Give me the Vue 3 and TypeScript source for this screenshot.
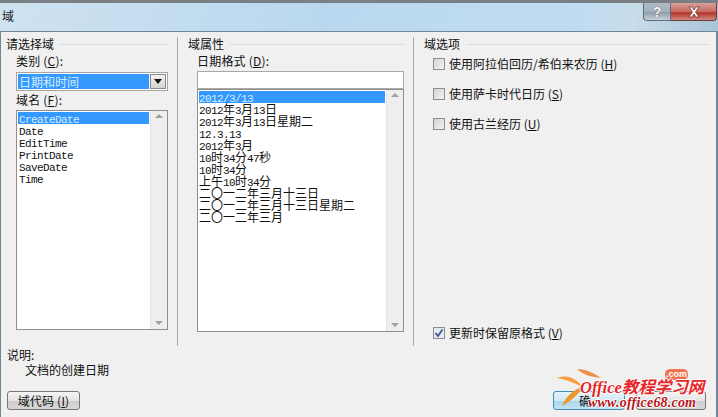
<script setup lang="ts">
type Seg = { t: string; latin: boolean }
const split = (s: string): Seg[] =>
  (s.match(/[\x00-\x7f]+|[^\x00-\x7f]+/g) ?? []).map((t) => ({ t, latin: t.charCodeAt(0) < 128 }))
const names = ['CreateDate', 'Date', 'EditTime', 'PrintDate', 'SaveDate', 'Time'].map(split)
const formats = [
  '2012/3/13',
  '2012年3月13日',
  '2012年3月13日星期二',
  '12.3.13',
  '2012年3月',
  '10时34分47秒',
  '10时34分',
  '上午10时34分',
  '二〇一二年三月十三日',
  '二〇一二年三月十三日星期二',
  '二〇一二年三月',
].map(split)
const options = [
  { label: '使用阿拉伯回历/希伯来农历', key: 'H' },
  { label: '使用萨卡时代日历', key: 'S' },
  { label: '使用古兰经历', key: 'U' },
]
</script>

<template>
  <div class="dialog">
    <header class="titlebar">
      <span class="title">域</span>
      <div class="caption">
        <span class="cap help">?</span>
        <span class="cap close">
          <svg width="18" height="12" viewBox="0 0 18 12"><path d="M4 1h3l2 3 2-3h3l-3.500 5L14 11h-3L9 8l-2 3H4l3.500-5z" fill="#fff" stroke="#6b2a26" stroke-width=".7"/></svg>
        </span>
      </div>
    </header>
    <main class="client">
      <div class="columns">
        <section class="group left">
          <div class="legend"><span>请选择域</span><i></i></div>
          <div class="field-label first">类别 (<u>C</u>):</div>
          <div class="combo">
            <span class="combo-value">日期和时间</span>
            <span class="combo-btn"><b></b></span>
          </div>
          <div class="field-label name-label">域名 (<u>F</u>):</div>
          <div class="listbox names">
            <div class="rows">
              <div v-for="(row, i) in names" :key="i" class="row" :class="{ sel: i === 0 }">
                <span v-for="(s, j) in row" :key="j" :class="s.latin ? 'latin' : 'cjk'">{{ s.t }}</span>
              </div>
            </div>
            <div class="scroll"><b class="up"></b><b class="down"></b></div>
          </div>
        </section>
        <section class="group middle">
          <div class="legend"><span>域属性</span><i></i></div>
          <div class="field-label first">日期格式 (<u>D</u>):</div>
          <div class="textbox"></div>
          <div class="listbox formats">
            <div class="rows">
              <div v-for="(row, i) in formats" :key="i" class="row" :class="{ sel: i === 0 }">
                <span v-for="(s, j) in row" :key="j" :class="s.latin ? 'latin' : 'cjk'">{{ s.t }}</span>
              </div>
            </div>
            <div class="scroll"><b class="up"></b><b class="down"></b></div>
          </div>
        </section>
        <section class="group right">
          <div class="legend"><span>域选项</span><i></i></div>
          <label v-for="o in options" :key="o.key" class="check">
            <span class="box"></span>
            <span>{{ o.label }} (<u>{{ o.key }}</u>)</span>
          </label>
          <label class="check keep">
            <span class="box on">
              <svg width="10" height="10" viewBox="0 0 10 10"><path d="M1.500 5 4 8 8.500 1.500" fill="none" stroke="#3c5a96" stroke-width="1.800"/></svg>
            </span>
            <span>更新时保留原格式 (<u>V</u>)</span>
          </label>
        </section>
      </div>
      <div class="desc">
        <div>说明:</div>
        <div class="desc-text">文档的创建日期</div>
      </div>
      <footer class="footer">
        <button class="btn code">域代码 (<u>I</u>)</button>
        <div class="actions">
          <button class="btn ok">确</button>
          <button class="btn cancel"></button>
        </div>
      </footer>
      <div class="mark">
        <svg class="swoosh" width="50" height="40" viewBox="0 0 50 40">
          <path d="M2 10C12 6 22 10 28 20 21 15 12 12 2 10z" fill="#f2a040"/>
          <path d="M22 1C31 1 39 5 46 10 37 9 28 7 22 1z" fill="#ee8f4c"/>
          <path d="M29 18C24 26 15 34 7 38 10 29 19 21 29 18z" fill="#ed9a2c"/>
        </svg>
        <span class="bubble">.com</span>
        <div class="mark-a">Office教程学习网</div>
        <div class="mark-b">www.office68.com</div>
      </div>
    </main>
  </div>
</template>

<style scoped>
.dialog {
  width: 718px;
  height: 417px;
  display: flex;
  flex-direction: column;
  overflow: hidden;
  background: #f0f0f0;
  color: #111;
  font: 12px/14px "Noto Sans CJK SC", "Liberation Sans", sans-serif;
  box-sizing: border-box;
}
.titlebar {
  height: 32px;
  flex: none;
  box-sizing: border-box;
  display: flex;
  justify-content: space-between;
  padding: 0 1px 0 2px;
  border-top: 3px solid #7a7f84;
  border-bottom: 1px solid #6f8598;
  background: linear-gradient(100deg, #cfe2f0 0%, #b9d8ef 45%, #bfdcf2 80%, #c8dcea 88%, #a9c4d8 100%);
}
.title { font-size: 12px; line-height: 25px; color: #222; }
.caption { display: flex; height: 18px; }
.cap { display: flex; align-items: center; justify-content: center; box-sizing: border-box; height: 18px; }
.help {
  width: 28px;
  border: 1px solid #5f6f7e;
  border-top: 0;
  border-radius: 0 0 0 4px;
  background: linear-gradient(#b0bac3, #a3afba 50%, #8e9ca8 55%, #c7d2da);
  color: #f4f4f4;
  font: bold 14px "Liberation Sans", sans-serif;
  text-shadow: 0 0 1px #444;
}
.close {
  width: 46px;
  border: 1px solid #6e3a38;
  border-top: 0;
  border-left: 0;
  border-radius: 0 0 4px 0;
  background: linear-gradient(#d8a09a, #c66a60 50%, #b4332a 58%, #cf8a82);
}
.client {
  position: relative;
  flex: 1;
  display: flex;
  flex-direction: column;
  min-height: 0;
  padding: 0 6px 0 7px;
  border-left: 1px solid #6f8598;
  border-right: 2px solid #6f8598;
  box-sizing: border-box;
}
.columns { display: flex; height: 314px; flex: none; padding-top: 5px; box-sizing: border-box; margin-left: -2px; }
.group { position: relative; box-sizing: border-box; flex: none; }
.left { width: 172px; padding-right: 8px; border-right: 1px solid #a9a9a9; }
.middle { width: 236px; padding: 0 9px 0 10px; border-right: 1px solid #a9a9a9; }
.right { flex: 1; padding-left: 10px; }
.legend { display: flex; align-items: center; gap: 6px; height: 14px; }
.legend i { flex: 1; height: 1px; background: #dcdcdc; }
.field-label { padding-left: 10px; height: 14px; letter-spacing: .2px; }
.first { margin-top: 3px; }
.middle .field-label { padding-left: 9px; }
.name-label { margin-top: 2px; }
u { text-decoration: underline; text-underline-offset: 1px; }
.combo {
  margin: 4px 0 0 10px;
  height: 19px;
  width: 152px;
  box-sizing: border-box;
  border: 1px solid #a5a5a5;
  background: #fff;
  display: flex;
  padding: 1px;
}
.combo-value { flex: 1; background: #3399ff; color: #d8ecff; padding-left: 1px; line-height: 15px; font-size: 12px; }
.combo-btn {
  width: 16px;
  margin-left: 1px;
  display: flex;
  align-items: center;
  justify-content: center;
  border: 1px solid #8a8a8a;
  box-sizing: border-box;
  background: linear-gradient(#f2f2f2, #d4d4d4);
}
.combo-btn b { border: 4px solid transparent; border-top: 5px solid #111; border-bottom: 0; }
.listbox {
  display: flex;
  box-sizing: border-box;
  border: 1px solid #8f8f8f;
  background: #fff;
}
.names { margin: 3px 0 0 10px; width: 152px; height: 220px; }
.formats { margin-left: 9px; height: 243px; }
.rows { flex: 1; padding: 1px 1px 0 1px; }
.row { height: 12px; line-height: 12px; white-space: nowrap; color: #111; padding-left: 1px; }
.formats .row { padding-left: 0; }
.row.sel { background: #3399ff; color: #d8ecff; }
.latin { font: 11px/12px "Liberation Mono", monospace; letter-spacing: -.6px; }
.cjk { font: 12px/12px "Noto Sans CJK SC", sans-serif; }
.scroll { position: relative; width: 17px; flex: none; background: #eee; border-left: 1px solid #e4e4e4; box-sizing: border-box; }
.scroll b { position: absolute; left: 4px; border: 4px solid transparent; }
.up { top: 3px; border-top: 0 !important; border-bottom: 4px solid #a0a0a0 !important; }
.down { bottom: 4px; border-bottom: 0 !important; border-top: 4px solid #a0a0a0 !important; }
.textbox {
  margin: 3px 0 0 9px;
  height: 18px;
  box-sizing: border-box;
  border: 1px solid #a8a8a8;
  background: #fff;
}
.check { display: flex; align-items: center; gap: 4px; height: 14px; margin-left: 9px; margin-top: 16px; white-space: nowrap; }
.legend + .check { margin-top: 6px; }
.box {
  width: 12px;
  height: 12px;
  flex: none;
  box-sizing: border-box;
  border: 1px solid #8e8e8e;
  background: linear-gradient(135deg, #d4d4d4, #f2f2f2);
  display: flex;
  align-items: center;
  justify-content: center;
}
.box.on { background: #e3e9f0; }
.keep { margin-top: 195px; }
.desc { margin: 2px 0 0 -1px; height: 30px; }
.desc-text { padding-left: 18px; margin-top: 1px; }
.footer { display: flex; justify-content: space-between; margin: 13px 0 0 -1px; }
.btn {
  height: 19px;
  box-sizing: border-box;
  border: 1px solid #777;
  border-radius: 3px;
  background: linear-gradient(#f4f4f4, #e4e4e4 50%, #cccccc 55%, #d8d8d8);
  color: #111;
  font: 12px/14px "Noto Sans CJK SC", sans-serif;
  padding: 0;
  letter-spacing: .2px;
}
.code { width: 73px; }
.actions { display: flex; gap: 11px; margin-right: 4px; }
.ok {
  width: 72px;
  text-align: left;
  padding-left: 25px;
  border-color: #3c8fb0;
  background: linear-gradient(#e4f3fb, #cfe9f6 50%, #a8d5ec 55%, #c3e3f3);
}
.cancel { width: 70px; }
.mark { position: absolute; left: 550px; top: 333px; width: 165px; height: 50px; pointer-events: none; }
.swoosh { position: absolute; left: 4px; top: 3px; }
.bubble {
  position: absolute;
  left: 114px;
  top: 4px;
  width: 23px;
  height: 11px;
  border-radius: 5px;
  background: #f0734f;
  color: #fff;
  font: bold 9px/11px "Liberation Sans", sans-serif;
  text-align: center;
}
.mark-a {
  position: absolute;
  left: 29px;
  top: 14px;
  white-space: nowrap;
  color: #e8262a;
  font: italic bold 16.500px/18px "Liberation Serif", "Noto Sans CJK SC", serif;
  text-shadow: 1px 0 #fff, -1px 0 #fff, 0 1px #fff, 0 -1px #fff;
}
.mark-b {
  position: absolute;
  left: 37px;
  top: 30px;
  white-space: nowrap;
  color: #b8141a;
  font: italic bold 14px/15px "Liberation Serif", serif;
  letter-spacing: .2px;
  text-shadow: 1px 0 #fff, -1px 0 #fff, 0 1px #fff, 0 -1px #fff;
}
</style>
